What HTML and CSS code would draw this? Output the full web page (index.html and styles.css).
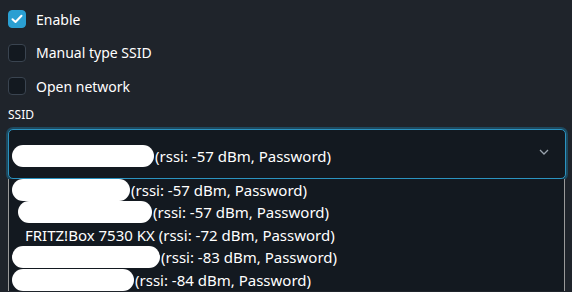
FILE: index.html
```html
<!DOCTYPE html>
<html lang="en">
<head>
    <meta charset="UTF-8">
    <meta name="viewport" content="width=device-width, initial-scale=1.0">
    <title>WiFi Settings</title>
    <link rel="stylesheet" href="styles.css">
</head>
<body>
    <div class="form">
        <label class="check">
            <span class="box checked">
                <svg width="12" height="10" viewBox="0 0 12 10"><path d="M1.5 5.2 L4.5 8 L10.5 1.8" fill="none" stroke="#fff" stroke-width="2" stroke-linecap="round" stroke-linejoin="round"/></svg>
            </span>
            <span class="check-label">Enable</span>
        </label>
        <label class="check">
            <span class="box"></span>
            <span class="check-label">Manual type SSID</span>
        </label>
        <label class="check">
            <span class="box"></span>
            <span class="check-label">Open network</span>
        </label>

        <div class="field-label">SSID</div>
        <div class="select">
            <div class="select-value">
                <span class="blot" style="width: 142px"></span>(rssi: -57 dBm, Password)
            </div>
            <svg class="chevron" width="10" height="6" viewBox="0 0 10 6"><path d="M1 1 L5 5 L9 1" fill="none" stroke="#9aa3ad" stroke-width="1.3"/></svg>
        </div>
        <ul class="options">
            <li><span class="blot" style="width: 118px"></span>(rssi: -57 dBm, Password)</li>
            <li class="indent"><span class="blot" style="width: 134px"></span> (rssi: -57 dBm, Password)</li>
            <li class="plain">FRITZ!Box 7530 KX (rssi: -72 dBm, Password)</li>
            <li><span class="blot" style="width: 148px"></span>(rssi: -83 dBm, Password)</li>
            <li><span class="blot" style="width: 122px"></span>(rssi: -84 dBm, Password)</li>
        </ul>
    </div>
</body>
</html>
```

FILE: styles.css
```css
body {
    margin: 0;
    padding: 0;
    background: #1f242b;
    color: #ffffff;
    font-family: "Noto Sans", "Open Sans", sans-serif;
    overflow: hidden;
}

.form {
    padding: 10px 6px 0 8px;
    display: flex;
    flex-direction: column;
}

.check {
    display: flex;
    align-items: center;
    gap: 10px;
    height: 18px;
    margin-bottom: 15.5px;
    font-size: 14px;
}

.box {
    width: 16px;
    height: 16px;
    border: 1px solid #3a4450;
    border-radius: 4px;
    background: #131920;
    display: flex;
    align-items: center;
    justify-content: center;
}

.box.checked {
    background: #2a9fd2;
    border-color: #2a9fd2;
}

.field-label {
    font-size: 12px;
    margin-top: -4px;
    height: 16px;
    line-height: 16px;
}

.select {
    margin-top: 6px;
    height: 48px;
    border: 1px solid #2b93c0;
    border-radius: 5px;
    box-shadow: 0 0 0 2px #1d4a60;
    background: #131920;
    display: flex;
    align-items: center;
    justify-content: space-between;
    padding: 0 16px 0 3px;
    margin-right: 0;
    font-size: 15px;
}

.select-value {
    display: flex;
    align-items: center;
    margin-top: 5px;
}

.chevron {
    margin-top: -3px;
}

.blot {
    display: inline-block;
    height: 22px;
    background: #ffffff;
    border-radius: 12px;
    margin-right: 1px;
}

.options {
    list-style: none;
    margin: 0;
    padding: 0;
    border-left: 1px solid #9a9a9a;
    border-right: 1px solid #9a9a9a;
    background: #131920;
    font-size: 15px;
    margin-right: 1px;
}

.options li {
    height: 22.5px;
    display: flex;
    align-items: center;
    padding-left: 3px;
}

.options li.indent {
    padding-left: 9px;
}

.options li.plain {
    padding-left: 16px;
}
```
